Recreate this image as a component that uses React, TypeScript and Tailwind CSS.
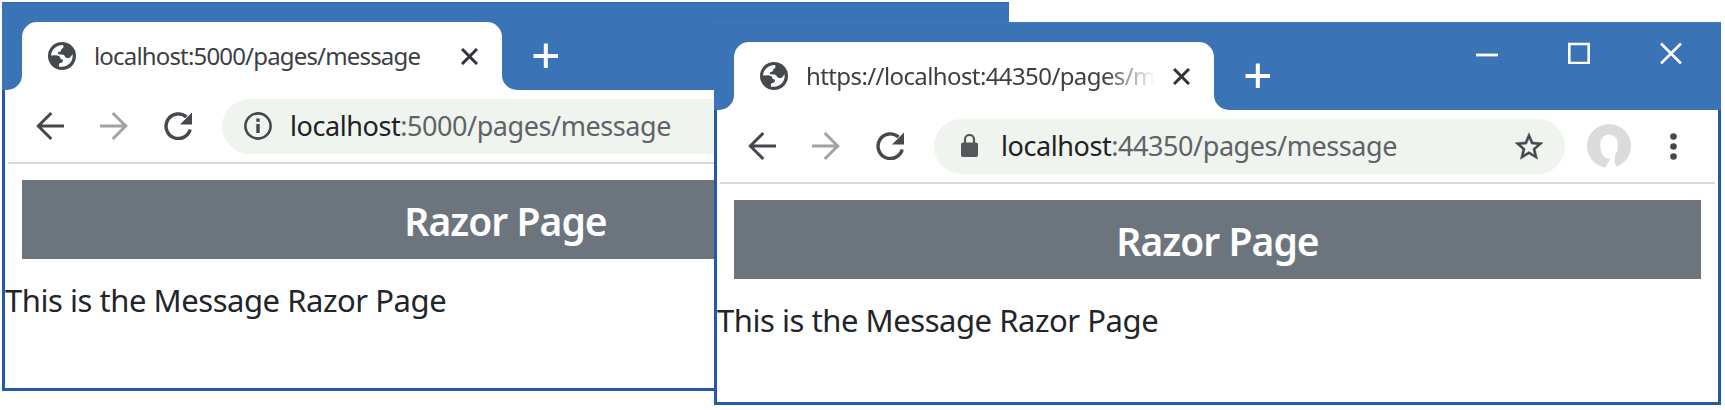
import React from 'react';

function Globe() {
  return (
    <svg className="h-[28px] w-[28px] shrink-0" viewBox="0 0 28 28">
      <circle cx="14" cy="14" r="14" fill="#45494e" />
      <path d="M3 13.500C3.500 7.500 8.500 3 15 3C16 4.800 15.500 6.200 13.500 7L12.800 9.300L10.200 10.200L9.800 12.200L14.500 12.400C16.500 12.600 17 14.500 17.600 15.600L20.500 16.200C22.500 15.500 23.500 13.500 24.500 12C26 19.500 19 26.500 10.800 24.500L11.200 21.600L14.500 20.200L15 17.800L12.800 17L11.500 14.200L8.500 13.300Z" fill="#fff" />
    </svg>
  );
}

function Arrow({ flip = false }: { flip?: boolean }) {
  return (
    <svg className={flip ? 'h-[28px] w-[28px] -scale-x-100 shrink-0' : 'h-[28px] w-[28px] shrink-0'} viewBox="0 0 28 28" fill="none" stroke={flip ? '#a0a2a4' : '#45494e'} strokeWidth="3">
      <path d="M28 14H2.300M15.300 1L2.300 14L15.300 27" />
    </svg>
  );
}

function Reload() {
  return (
    <svg className="h-[28px] w-[28px] shrink-0" viewBox="0 0 28 28">
      <path d="M26.200 17.500A12.300 12.300 0 1 1 22.500 5" fill="none" stroke="#45494e" strokeWidth="3.400" />
      <path d="M28 .5V12.500H16Z" fill="#45494e" />
    </svg>
  );
}

function Info() {
  return (
    <svg className="h-[28px] w-[28px] shrink-0" viewBox="0 0 28 28">
      <circle cx="14" cy="14" r="12.600" fill="none" stroke="#45494e" strokeWidth="2.600" />
      <path d="M12.300 6.500h3.400v3.200h-3.400zM12.300 12h3.400v9h-3.400z" fill="#45494e" />
    </svg>
  );
}

function Lock() {
  return (
    <svg className="h-[24px] w-[17px] shrink-0" viewBox="0 0 17 24">
      <rect y="8.500" width="17" height="14.500" rx="2" fill="#55585a" />
      <path d="M4 9V5.500a4.500 4.500 0 0 1 9 0V9" fill="none" stroke="#55585a" strokeWidth="2.200" />
    </svg>
  );
}

function Star() {
  return (
    <svg className="h-[28px] w-[28px] shrink-0" viewBox="2 1.500 20 20" fill="#45494e" stroke="#45494e" strokeWidth=".3">
      <path d="M22 9.240l-7.190-.62L12 2 9.190 8.630 2 9.240l5.460 4.730L5.820 21 12 17.270 18.180 21l-1.630-7.030L22 9.240zM12 15.400l-3.760 2.270 1-4.280-3.320-2.880 4.380-.38L12 6.100l1.710 4.040 4.380.38-3.320 2.880 1 4.280L12 15.400z" />
    </svg>
  );
}

function Avatar() {
  return (
    <svg className="h-[44px] w-[44px] shrink-0" viewBox="0 0 44 44">
      <circle cx="22" cy="22" r="22" fill="#dadbdc" />
      <path d="M18 44L24 33.500C22.500 35 21 35 19 34C15 31.500 13.300 27 13.300 21C13.300 14 17 10.500 22 10.500S31 14 31 21C31 26 29.500 29 28 31.500L27.500 38L30 44Z" fill="#fff" />
    </svg>
  );
}

function Flare({ right = false }: { right?: boolean }) {
  return (
    <svg className={right ? 'h-[15px] w-[15px] self-end shrink-0 -scale-x-100' : 'h-[15px] w-[15px] self-end shrink-0'} viewBox="0 0 15 15">
      <path d="M0 15A15 15 0 0 0 15 0V15Z" fill="#fff" />
    </svg>
  );
}

type WindowProps = { secure?: boolean };

function BrowserWindow({ secure = false }: WindowProps) {
  return (
    <div className={secure ? 'flex h-[383px] w-[1007px] flex-col border-x-[3px] border-b-[3px] border-[#2558a5] bg-white' : 'flex h-[389px] w-[1007px] flex-col border-x-[3px] border-b-[3px] border-[#2558a5] bg-white'}>
      <div className={secure ? '-mx-[3px] flex h-[88px] shrink-0 border-t border-[#447abb] bg-[#3a73b6] pl-[5px] pt-[19px]' : '-mx-[3px] flex h-[88px] shrink-0 border-t border-[#2b62ae] bg-[#3a73b6] pl-[5px] pt-[19px]'}>
        <Flare />
        <div className="flex w-[480px] items-center rounded-t-[15px] bg-white pl-[26px]">
          <Globe />
          <div className={secure ? 'ml-[18px] w-[353px] overflow-hidden whitespace-nowrap text-[24px] leading-[30px] tracking-[-0.6px] text-[#3c4043] [mask-image:linear-gradient(to_right,#000_84%,transparent_99%)]' : 'ml-[18px] w-[353px] whitespace-nowrap text-[24px] leading-[30px] tracking-[-0.83px] text-[#3c4043]'}>
            {secure ? 'https://localhost:44350/pages/message' : 'localhost:5000/pages/message'}
          </div>
          <svg className="ml-[14px] h-[17px] w-[17px] shrink-0" viewBox="0 0 17 17" stroke="#303338" strokeWidth="3">
            <path d="M1 1L16 16M16 1L1 16" />
          </svg>
        </div>
        <Flare right />
        <svg className="ml-[16px] mt-[21px] h-[26px] w-[26px] shrink-0" viewBox="0 0 26 26" stroke="#fff" strokeWidth="4">
          <path d="M0.500 13H25M12.800 0.500V25" />
        </svg>
        {secure && (
          <div className="ml-auto mr-[39px] flex h-[22px] gap-[70px]">
            <svg className="h-[22px] w-[22px]" viewBox="0 0 22 22" stroke="#fff" strokeWidth="2.800"><path d="M0 13H22" /></svg>
            <svg className="h-[22px] w-[22px]" viewBox="0 0 22 22" stroke="#fff" strokeWidth="2.600" fill="none"><path d="M1.300 2H20.700V21H1.300Z" /></svg>
            <svg className="h-[22px] w-[22px]" viewBox="0 0 22 22" stroke="#fff" strokeWidth="2.600"><path d="M1 1.500L21 21.500M21 1.500L1 21.500" /></svg>
          </div>
        )}
      </div>
      <div className="mx-[3px] flex h-[74px] shrink-0 items-center border-b-2 border-[#d8d9da] pl-[28px]">
        <div className="flex gap-9">
          <Arrow />
          <Arrow flip />
          <Reload />
        </div>
        <div className={secure ? 'ml-[30px] flex h-[55px] w-[631px] items-center rounded-full bg-[#eff4ef] pl-[27px] pr-[22px]' : 'ml-[30px] flex h-[55px] w-[780px] items-center rounded-l-full bg-[#eff4ef] pl-[22px]'}>
          {secure ? <Lock /> : <Info />}
          <span className={secure ? 'ml-[23px] whitespace-nowrap text-[27px] tracking-[-0.43px] text-[#202124]' : 'ml-[18px] whitespace-nowrap text-[27px] tracking-[-0.43px] text-[#202124]'}>
            localhost<span className="text-[#5f6368]">{secure ? ':44350/pages/message' : ':5000/pages/message'}</span>
          </span>
          {secure && <div className="ml-auto flex"><Star /></div>}
        </div>
        {secure && (
          <>
            <div className="ml-[22px] flex"><Avatar /></div>
            <svg className="ml-[39px] h-[28px] w-[7px]" viewBox="0 0 7 28" fill="#45494e">
              <circle cx="3.500" cy="4.500" r="3.300" /><circle cx="3.500" cy="14.500" r="3.300" /><circle cx="3.500" cy="24.500" r="3.300" />
            </svg>
          </>
        )}
      </div>
      <h1 className="mx-[17px] mt-[16px] flex h-[79px] shrink-0 items-center justify-center bg-[#6c757d] pt-[3px] text-[39px] font-semibold tracking-[-0.95px] text-white">
        Razor Page
      </h1>
      <p className="mt-[20px] whitespace-nowrap text-[31px] leading-[42px] tracking-[-0.46px] text-[#212529]">This is the Message Razor Page</p>
    </div>
  );
}

export default function App() {
  return (
    <main className="relative h-[410px] w-[1725px] overflow-hidden bg-white font-['Noto_Sans',sans-serif]">
      <div className="absolute left-[2px] top-[2px]"><BrowserWindow /></div>
      <div className="absolute left-[714px] top-[22px]"><BrowserWindow secure /></div>
    </main>
  );
}
